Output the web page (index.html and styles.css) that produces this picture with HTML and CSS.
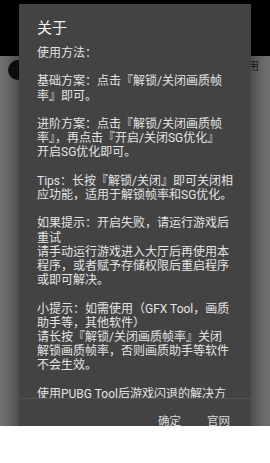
FILE: index.html
```html
<!DOCTYPE html>
<html lang="zh-CN">
<head>
<meta charset="utf-8">
<title>关于</title>
<link rel="stylesheet" href="styles.css">
</head>
<body>
<div class="screen">
  <div class="page">
    <div class="toolbar"></div>
    <div class="row">
      <span class="avatar"><span class="avatar-mark"></span></span>
      <span class="label">使用</span>
    </div>
  </div>
  <div class="dialog">
    <div class="title">关于</div>
    <div class="message">
      <p>使用方法：</p>
      <p>基础方案：点击『解锁/关闭画质帧<br>率』即可。</p>
      <p>进阶方案：点击『解锁/关闭画质帧<br>率』，再点击『开启/关闭SG优化』<br>开启SG优化即可。</p>
      <p>Tips：长按『解锁/关闭』即可关闭相<br>应功能，适用于解锁帧率和SG优化。</p>
      <p>如果提示：开启失败，请运行游戏后<br>重试<br>请手动运行游戏进入大厅后再使用本<br>程序，或者赋予存储权限后重启程序<br>或即可解决。</p>
      <p>小提示：如需使用（GFX Tool，画质<br>助手等，其他软件）<br>请长按『解锁/关闭画质帧率』关闭<br>解锁画质帧率，否则画质助手等软件<br>不会生效。</p>
      <p>使用PUBG Tool后游戏闪退的解决方<br>案</p>
    </div>
    <div class="divider"></div>
    <div class="buttons">
      <span class="btn">确定</span>
      <span class="btn">官网</span>
    </div>
  </div>
</div>
</body>
</html>
```

FILE: styles.css
```css
html, body {
  margin: 0;
  padding: 0;
  background: #ffffff;
}

body {
  font-family: Roboto, "Noto Sans CJK SC", sans-serif;
}

.screen {
  position: relative;
  width: 270px;
  height: 426px;
  overflow: hidden;
  background: #747474;
}

.page {
  display: flex;
  flex-direction: column;
}

.toolbar {
  height: 56px;
  background: #000000;
}

.row {
  display: flex;
  justify-content: space-between;
  align-items: flex-start;
  padding: 4px 11px 0 8px;
}

.avatar {
  position: relative;
  width: 20px;
  height: 20px;
  border-radius: 50%;
  background: #111111;
}

.avatar-mark {
  position: absolute;
  right: 0;
  top: 2px;
  width: 2px;
  height: 4px;
  background: #dddddd;
}

.label {
  font-size: 11px;
  line-height: 14px;
  color: #1e1e1e;
}

.dialog {
  position: absolute;
  left: 19px;
  top: 4px;
  width: 232px;
  height: 450px;
  background: #434343;
  box-shadow: 0 0 18px 5px rgba(0, 0, 0, 0.45);
  display: flex;
  flex-direction: column;
}

.title {
  padding: 14px 18px 0;
  font-size: 15px;
  line-height: 20px;
  color: #f2f2f2;
}

.message {
  margin-top: 8px;
  height: 352px;
  overflow: hidden;
  padding: 0 14px 0 18px;
  font-size: 12px;
  line-height: 14.2px;
  color: #e4e4e4;
}

.message p {
  margin: 0 0 14.2px;
  white-space: nowrap;
}

.divider {
  height: 1px;
  background: #525252;
}

.buttons {
  display: flex;
  justify-content: flex-end;
  gap: 26px;
  padding: 14px 21px 0 0;
}

.btn {
  font-size: 11.5px;
  line-height: 16px;
  color: #dadada;
}
```
